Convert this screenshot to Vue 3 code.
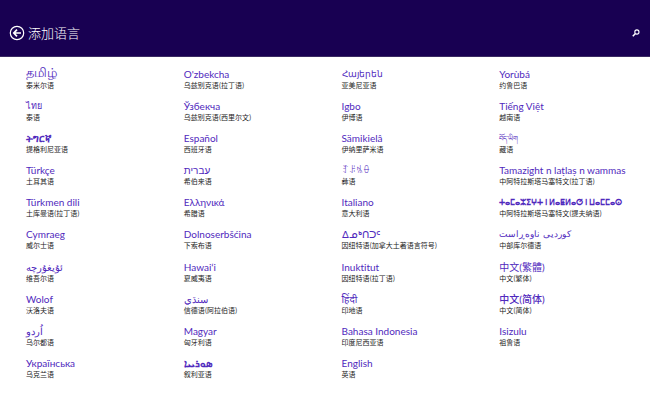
<template>
    <div class="language-page">
        <header class="page-header">
            <button type="button" class="icon-button back-button" aria-label="返回">
                <svg viewBox="0 0 16 16" width="16" height="16" aria-hidden="true">
                    <circle cx="8" cy="8" r="6.7" fill="none" stroke="currentColor" stroke-width="1.2" />
                    <path d="M12 8H5M8 4.6L4.8 8L8 11.4" fill="none" stroke="currentColor" stroke-width="1.7" />
                </svg>
            </button>
            <h1 class="page-title">添加语言</h1>
            <button type="button" class="icon-button search-button" aria-label="搜索">
                <svg viewBox="0 0 8 8" width="8" height="8" aria-hidden="true">
                    <circle cx="4.9" cy="3" r="2.1" fill="none" stroke="currentColor" stroke-width="1.1" />
                    <path d="M3.2 4.8L0.8 7.2" fill="none" stroke="currentColor" stroke-width="1.6" />
                </svg>
            </button>
        </header>

        <main class="language-grid">
            <button
                v-for="lang in languages"
                :key="lang.label"
                type="button"
                class="language-item"
            >
                <span class="native-name" :class="lang.style"><bdi>{{ lang.name }}</bdi></span>
                <span class="local-name">{{ lang.label }}</span>
            </button>
        </main>
    </div>
</template>

<script setup>
// 按列排列，每列 10 个
const languages = [
    { name: 'தமிழ்', label: '泰米尔语', style: 'script-large' },
    { name: 'ไทย', label: '泰语', style: 'script-compact' },
    { name: 'ትግርኛ', label: '提格利尼亚语', style: 'script-bold' },
    { name: 'Türkçe', label: '土耳其语' },
    { name: 'Türkmen dili', label: '土库曼语(拉丁语)' },
    { name: 'Cymraeg', label: '威尔士语' },
    { name: 'ئۇيغۇرچە', label: '维吾尔语' },
    { name: 'Wolof', label: '沃洛夫语' },
    { name: 'اُردو', label: '乌尔都语' },
    { name: 'Українська', label: '乌克兰语' },

    { name: 'O\'zbekcha', label: '乌兹别克语(拉丁语)' },
    { name: 'Ўзбекча', label: '乌兹别克语(西里尔文)' },
    { name: 'Español', label: '西班牙语' },
    { name: 'עברית', label: '希伯来语' },
    { name: 'Ελληνικά', label: '希腊语' },
    { name: 'Dolnoserbšćina', label: '下索布语' },
    { name: 'Hawaiʻi', label: '夏威夷语' },
    { name: 'سنڌي', label: '信德语(阿拉伯语)' },
    { name: 'Magyar', label: '匈牙利语' },
    { name: 'ܣܘܪܝܝܐ', label: '叙利亚语', style: 'script-bold' },

    { name: 'Հայերեն', label: '亚美尼亚语', style: 'script-compact' },
    { name: 'Igbo', label: '伊博语' },
    { name: 'Sämikielâ', label: '伊纳里萨米语' },
    { name: 'ꆈꌠꁱꂷ', label: '彝语', style: 'script-compact' },
    { name: 'Italiano', label: '意大利语' },
    { name: 'ᐃᓄᒃᑎᑐᑦ', label: '因纽特语(加拿大土著语言符号)' },
    { name: 'Inuktitut', label: '因纽特语(拉丁语)' },
    { name: 'हिंदी', label: '印地语' },
    { name: 'Bahasa Indonesia', label: '印度尼西亚语' },
    { name: 'English', label: '英语' },

    { name: 'Yorùbá', label: '约鲁巴语' },
    { name: 'Tiếng Việt', label: '越南语' },
    { name: 'བོད་ཡིག', label: '藏语', style: 'script-small' },
    { name: 'Tamazight n laṭlaṣ n wammas', label: '中阿特拉斯塔马塞特文(拉丁语)' },
    { name: 'ⵜⴰⵎⴰⵣⵉⵖⵜ ⵏ ⵍⴰⵟⵍⴰⵚ ⵏ ⵡⴰⵎⵎⴰⵙ', label: '中阿特拉斯塔马塞特文(提夫纳语)', style: 'script-tifinagh' },
    { name: 'کوردیی ناوەڕاست', label: '中部库尔德语', style: 'script-compact' },
    { name: '中文(繁體)', label: '中文(繁体)' },
    { name: '中文(简体)', label: '中文(简体)', style: 'script-medium' },
    { name: 'Isizulu', label: '祖鲁语' },
]
</script>

<style>
body {
    margin: 0;
    background: #ffffff;
}
</style>

<style scoped>
.language-page {
    display: flex;
    flex-direction: column;
    min-height: 100vh;
    font-family: Lato, 'Noto Sans', 'Noto Sans CJK SC', sans-serif;
    background: #ffffff;
}

button {
    margin: 0;
    padding: 0;
    border: none;
    background: none;
    font-family: inherit;
    cursor: pointer;
}

/* ── 顶栏 ── */
.page-header {
    display: flex;
    align-items: center;
    height: 57px;
    padding: 9px 10px 0 9px;
    box-sizing: border-box;
    border-bottom: 1px solid #3a2a62;
    background: #180052;
    color: #ffffff;
}

.icon-button {
    display: flex;
    color: inherit;
}

.page-title {
    margin: 0 auto 0 3px;
    font-family: 'Noto Sans CJK SC', sans-serif;
    font-size: 13px;
    font-weight: 300;
    line-height: 16px;
}

/* ── 语言列表 ── */
.language-grid {
    flex: 1;
    display: grid;
    grid-template-rows: repeat(10, 1fr);
    grid-auto-flow: column;
    grid-auto-columns: 1fr;
    padding: 10px 0 18px 26px;
    margin-right: -7px;
}

.language-item {
    display: flex;
    flex-direction: column;
    align-items: flex-start;
    text-align: left;
    white-space: nowrap;
}

.native-name {
    font-size: 10px;
    line-height: 14px;
    height: 14px;
    color: #5029bd;
    font-variant-ligatures: no-common-ligatures;
}

/* ── 各文字的字号与字重 ── */
.script-large {
    font-size: 13px;
    line-height: 10px;
}

.script-compact {
    font-size: 9px;
}

.script-small {
    font-size: 7px;
}

.script-medium {
    font-weight: 500;
}

.script-bold {
    font-weight: 700;
}

.script-tifinagh {
    font-size: 8px;
    font-weight: 700;
}

.local-name {
    font-family: 'Noto Sans CJK SC', sans-serif;
    font-size: 7px;
    line-height: 9px;
    color: #222222;
}
</style>
